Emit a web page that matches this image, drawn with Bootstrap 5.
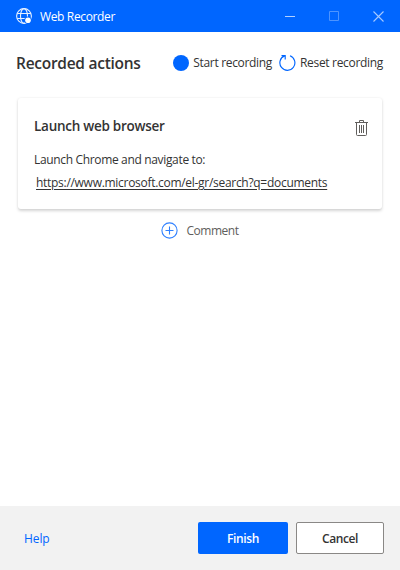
<!DOCTYPE html>
<html lang="en">
<head>
<meta charset="utf-8">
<meta name="viewport" content="width=device-width, initial-scale=1">
<title>Web Recorder</title>
<link href="https://cdn.jsdelivr.net/npm/bootstrap@5.3.0/dist/css/bootstrap.min.css" rel="stylesheet">
<style>
body{font-family:"Open Sans","Noto Sans",sans-serif;font-size:12px;line-height:16px;letter-spacing:-.29px;color:#333;background:#fff;white-space:nowrap}
svg{display:block;flex:none}
.titlebar{height:32px;background:#06f;color:#fff;padding:0 16px;letter-spacing:-.36px}
.app-name{margin:1px 0 0 8px}
.win-controls{gap:34px}
.toolbar-row{height:60px;padding:2px 17px 0 16px}
.page-title{font-size:15.5px;font-weight:600;line-height:20px;letter-spacing:-.27px}
.tool-btn{gap:4px;color:#333;font-size:12px;line-height:16px;letter-spacing:-.32px}
.tool-btn svg{margin-top:-1px}
.tools{gap:7px}
.action-card{height:111px;margin:6px 18px 0;padding:19px 14px 0 16px;border-radius:3px;box-shadow:0 1.6px 3px rgba(0,0,0,.17),0 0 2px rgba(0,0,0,.04)}
.action-title{font-size:13.5px;font-weight:600;line-height:18px;letter-spacing:-.27px}
.trash-icon{margin-top:3px}
.action-text{margin-top:16px;letter-spacing:-.34px}
.action-url{margin:7px 0 0 2px;color:#333;text-underline-offset:2px}
.comment-btn{margin-top:13px;gap:8px;color:#605e5c;letter-spacing:-.45px}
.footer-bar{height:64px;background:#f2f2f2;padding:0 16px 0 24px}
.help-link{margin-top:2px;color:#06f;letter-spacing:-.1px}
.dialog-btn{height:32px;width:88px;padding:2px 0 0;font-size:12px;font-weight:600;line-height:16px;letter-spacing:-.4px;border-radius:2px}
.btn-finish,.btn-finish:hover{width:90px;background:#06f;color:#fff}
.btn-cancel,.btn-cancel:hover{background:#fff;color:#333;border-color:#8a8886}
</style>
<script src="https://cdn.jsdelivr.net/npm/bootstrap@5.3.0/dist/js/bootstrap.bundle.min.js"></script>
</head>
<body class="d-flex flex-column vh-100 overflow-hidden">
<header class="titlebar d-flex align-items-center justify-content-between">
  <div class="d-flex align-items-center">
    <svg width="16" height="16" viewBox="0 0 16 16" fill="none" stroke="#fff"><g stroke-width="1.1" opacity=".9"><circle cx="8" cy="8" r="7.4"/><ellipse cx="8" cy="8" rx="3.5" ry="7.4"/><path d="M1.2 5.500h13.600M1.200 10.500h13.600"/></g><circle cx="12" cy="12.200" r="3.600" fill="#06f" stroke="none"/><circle cx="12" cy="12.200" r="2.800" fill="#fff" stroke="none"/></svg>
    <span class="app-name">Web Recorder</span>
  </div>
  <div class="win-controls d-flex align-items-center">
    <svg width="10" height="10" viewBox="0 0 10 10" stroke="#b3d1ff"><path d="M0 5.500h10"/></svg>
    <svg width="10" height="10" viewBox="0 0 10 10" fill="none" stroke="#4d94ff"><path d="M.5.5h9v9h-9z"/></svg>
    <svg width="11" height="11" viewBox="0 0 11 11" stroke="#a6c9ff" stroke-width="1.1"><path d="M.5.5l10 10M10.500.5l-10 10"/></svg>
  </div>
</header>
<div class="toolbar-row d-flex align-items-center justify-content-between">
  <h1 class="page-title mb-0">Recorded actions</h1>
  <div class="tools d-flex">
    <button class="tool-btn btn p-0 border-0 d-flex align-items-center"><svg width="16" height="16" viewBox="0 0 16 16"><circle cx="8" cy="8" r="8" fill="#06f"/></svg><span>Start recording</span></button>
    <button class="tool-btn btn p-0 border-0 d-flex align-items-center"><svg width="17" height="16" viewBox="0 0 17 16" fill="none" stroke="#06f" stroke-width="1.15"><path d="M11 .8A7.500 7.500 0 1 1 5.500.9M2.500.6h3.700v3.900"/></svg><span>Reset recording</span></button>
  </div>
</div>
<main class="flex-grow-1">
  <section class="action-card">
    <div class="d-flex justify-content-between align-items-start">
      <h2 class="action-title mb-0">Launch web browser</h2>
      <svg class="trash-icon" width="13" height="16" viewBox="0 0 13 16" fill="none" stroke="#605e5c"><path d="M0 2.500h13M4.500 2.500v-2h4v2M1.500 2.500v12q0 1 1 1h8q1 0 1-1v-12M4.500 5v8M6.500 5v8M8.500 5v8"/></svg>
    </div>
    <div class="action-text">Launch Chrome and navigate to:</div>
    <a class="action-url d-inline-block" href="#">https://www.microsoft.com/el-gr/search?q=documents</a>
  </section>
  <div class="comment-btn d-flex justify-content-center align-items-center">
    <svg width="17" height="17" viewBox="0 0 17 17" fill="none" stroke="#2f80ff" stroke-width="1.1"><circle cx="8.500" cy="8.500" r="7.600"/><path d="M8.500 4.500v8M4.500 8.500h8"/></svg>
    <span>Comment</span>
  </div>
</main>
<footer class="footer-bar d-flex align-items-center justify-content-between">
  <a class="help-link text-decoration-none" href="#">Help</a>
  <div class="d-flex gap-2">
    <button class="dialog-btn btn btn-finish">Finish</button>
    <button class="dialog-btn btn btn-cancel">Cancel</button>
  </div>
</footer>
</body>
</html>
